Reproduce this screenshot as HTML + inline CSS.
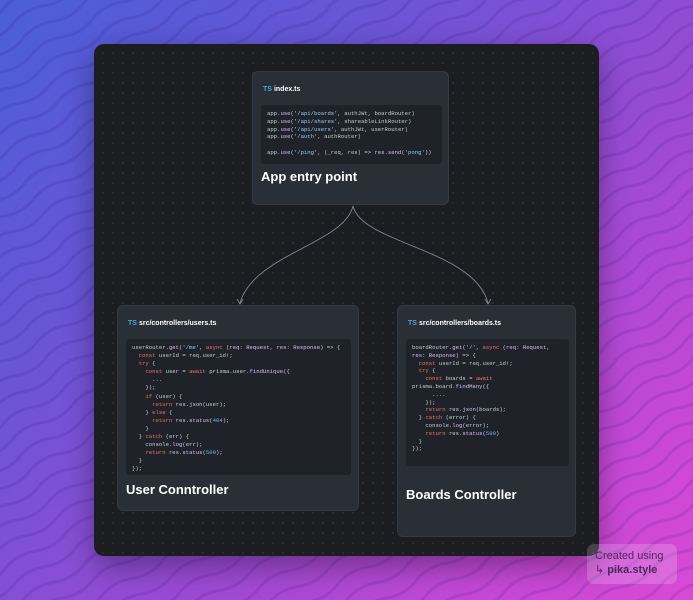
<!DOCTYPE html>
<html><head><meta charset="utf-8"><style>
*{margin:0;padding:0;box-sizing:border-box}
body{width:693px;height:600px;overflow:hidden;position:relative;font-family:"Liberation Sans",sans-serif;
background:linear-gradient(135deg,#4a5fd9 0%,#6a55d6 30%,#9a4ad4 60%,#c848d6 85%,#d84ad4 100%)}
.win{position:absolute;left:94px;top:44px;width:505px;height:512px;border-radius:10px;background-color:#1c1d21;
background-image:radial-gradient(circle,#2c2e33 0.8px,transparent 1.2px);background-size:10px 10px;background-position:4px 4px;
box-shadow:0 10px 30px rgba(0,0,0,.35)}
.card{position:absolute;background:#2a2e36;border-radius:6px;border:1px solid #353a43}
.fn{position:absolute;font-size:7px;font-weight:bold;color:#fff}
.fn b{color:#4aa3d8;margin-right:2px}
.code{position:absolute;background:#1f2228;border-radius:3px;font-family:"Liberation Mono",monospace;font-size:5.6px;color:#c5d0da;white-space:pre;padding:7px 6px}
.k{color:#f47067}.s{color:#96d0ff}.f{color:#dcbdfb}.n{color:#6cb6ff}
.t{position:absolute;font-weight:bold;color:#fff;font-size:13px}
.badge{position:absolute;left:587px;top:544px;width:90px;height:40px;border-radius:7px;background:rgba(255,255,255,.18);color:#4a2a5a;font-size:11px;padding:5px 8px;line-height:14px}
</style></head><body>
<svg width="693" height="600" style="position:absolute;left:0;top:0">
<defs><pattern id="w" width="70" height="18" patternUnits="userSpaceOnUse" patternTransform="rotate(-30)">
<path d="M0 9 Q17.5 2 35 9 T70 9" fill="none" stroke="rgba(40,10,110,0.13)" stroke-width="3"/></pattern></defs>
<rect width="693" height="600" fill="url(#w)"/>
</svg>
<div class="win">
<svg width="505" height="512" style="position:absolute;left:0;top:0" fill="none" stroke="#8a8f99" stroke-width="0.8">
<path d="M259 162 C250 200 160 210 146 259"/><path d="M259 162 C268 200 380 205 394 259"/>
<path d="M143 255 L146 260 L149 255" /><path d="M391 255 L394 260 L397 255"/>
</svg>
<div class="card" style="left:158px;top:27px;width:197px;height:134px">
<div class="fn" style="left:10px;top:14px"><b>TS</b>index.ts</div>
<div class="code" style="left:8px;top:33px;width:181px;height:59px;line-height:7.8px;padding-top:5px">app.<span class="f">use</span>(<span class="s">'/api/boards'</span>, authJWt, boardRouter)
app.<span class="f">use</span>(<span class="s">'/api/shares'</span>, shareableLinkRouter)
app.<span class="f">use</span>(<span class="s">'/api/users'</span>, authJWt, userRouter)
app.<span class="f">use</span>(<span class="s">'/auth'</span>, authRouter)

app.<span class="f">use</span>(<span class="s">'/ping'</span>, (_req, res) =&gt; res.<span class="f">send</span>(<span class="s">'pong'</span>))</div>
<div class="t" style="left:8px;top:97px">App entry point</div>
</div>
<div class="card" style="left:23px;top:261px;width:242px;height:206px">
<div class="fn" style="left:10px;top:14px"><b>TS</b>src/controllers/users.ts</div>
<div class="code" style="left:8px;top:33px;width:225px;height:136px;line-height:8.1px;padding-top:5px">userRouter.<span class="f">get</span>(<span class="s">'/me'</span>, <span class="k">async</span> (<span class="f">req</span>: <span class="f">Request</span>, <span class="f">res</span>: <span class="f">Response</span>) =&gt; {
  <span class="k">const</span> userId = req.user_id!;
  <span class="k">try</span> {
    <span class="k">const</span> user = <span class="k">await</span> prisma.user.<span class="f">findUnique</span>({
      ...
    });
    <span class="k">if</span> (user) {
      <span class="k">return</span> res.<span class="f">json</span>(user);
    } <span class="k">else</span> {
      <span class="k">return</span> res.<span class="f">status</span>(<span class="n">404</span>);
    }
  } <span class="k">catch</span> (err) {
    console.<span class="f">log</span>(err);
    <span class="k">return</span> res.<span class="f">status</span>(<span class="n">500</span>);
  }
});</div>
<div class="t" style="left:8px;top:176px">User Conntroller</div>
</div>
<div class="card" style="left:303px;top:261px;width:179px;height:232px">
<div class="fn" style="left:10px;top:14px"><b>TS</b>src/controllers/boards.ts</div>
<div class="code" style="left:8px;top:33px;width:163px;height:127px;line-height:7.8px;padding-top:5px">boardRouter.<span class="f">get</span>(<span class="s">'/'</span>, <span class="k">async</span> (<span class="f">req</span>: <span class="f">Request</span>,
<span class="f">res</span>: <span class="f">Response</span>) =&gt; {
  <span class="k">const</span> userId = req.user_id!;
  <span class="k">try</span> {
    <span class="k">const</span> boards = <span class="k">await</span>
prisma.board.<span class="f">findMany</span>({
      ....
    });
    <span class="k">return</span> res.<span class="f">json</span>(boards);
  } <span class="k">catch</span> (error) {
    console.<span class="f">log</span>(error);
    <span class="k">return</span> res.<span class="f">status</span>(<span class="n">500</span>)
  }
});</div>
<div class="t" style="left:8px;top:181px">Boards Controller</div>
</div>
</div>
<div class="badge">Created using<br>↳ <b>pika.style</b></div>
</body></html>
